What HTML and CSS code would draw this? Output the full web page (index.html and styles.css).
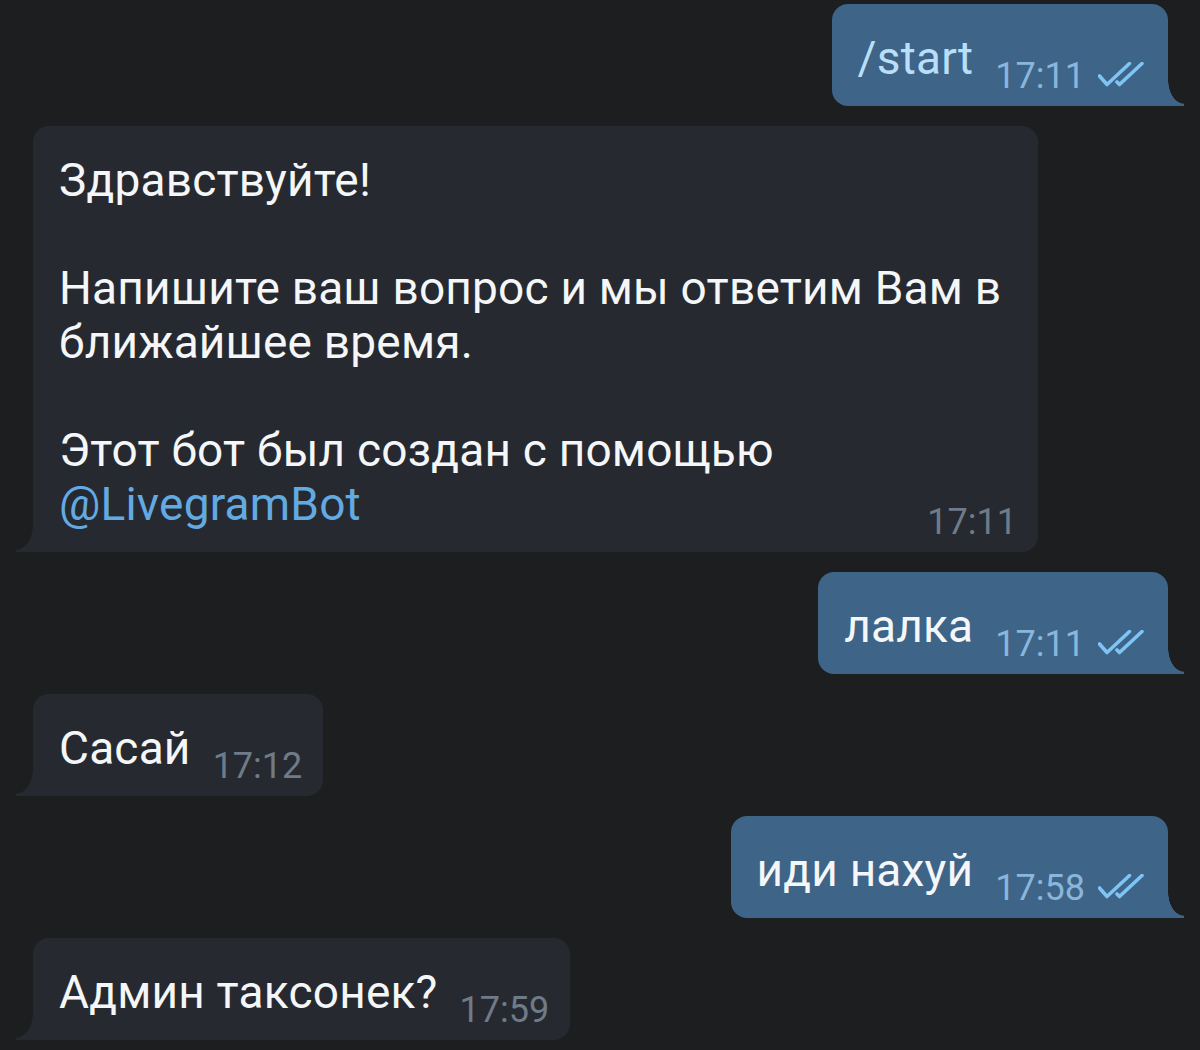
FILE: index.html
```html
<!DOCTYPE html>
<html lang="ru">
<head>
    <meta charset="UTF-8">
    <meta name="viewport" content="width=device-width, initial-scale=1.0">
    <title>Чат</title>
    <link rel="stylesheet" href="styles.css">
</head>
<body>
    <div class="chat">
        <div class="msg out">
            <p class="text"><a class="cmd" href="javascript:;">/start</a><span class="time">17:11<svg class="checks" width="46" height="26" viewBox="0 0 46 26"><path d="M1.5 14 L9 22.5 L31.5 1.5 M19 20 L21.5 22.5 L44 1.5"/></svg></span></p>
        </div>

        <div class="msg in">
            <p class="text">Здравствуйте!<br><br>Напишите ваш вопрос и мы ответим Вам в ближайшее время.<br><br>Этот бот был создан с помощью <a class="link" href="javascript:;">@LivegramBot</a><span class="time">17:11</span></p>
        </div>

        <div class="msg out">
            <p class="text">лалка<span class="time">17:11<svg class="checks" width="46" height="26" viewBox="0 0 46 26"><path d="M1.5 14 L9 22.5 L31.5 1.5 M19 20 L21.5 22.5 L44 1.5"/></svg></span></p>
        </div>

        <div class="msg in">
            <p class="text">Сасай<span class="time">17:12</span></p>
        </div>

        <div class="msg out">
            <p class="text">иди нахуй<span class="time">17:58<svg class="checks" width="46" height="26" viewBox="0 0 46 26"><path d="M1.5 14 L9 22.5 L31.5 1.5 M19 20 L21.5 22.5 L44 1.5"/></svg></span></p>
        </div>

        <div class="msg in">
            <p class="text">Админ таксонек?<span class="time">17:59</span></p>
        </div>
    </div>
</body>
</html>
```

FILE: styles.css
```css
*{
    margin: 0;
    padding: 0;
    box-sizing: border-box;
}
body{
    background-color: #1d1e20;
    font-family: Roboto, "Noto Sans", sans-serif;
    color: #f4f6f8;
}
a{
    text-decoration: none;
}
.chat{
    display: flex;
    flex-direction: column;
    gap: 20px;
    padding: 4px 32px 0 33px;
}
.msg{
    position: relative;
    border-radius: 16px;
    padding: 27px 21px 21px 26px;
}
.msg .text{
    font-size: 46px;
    line-height: 54px;
    letter-spacing: 0.2px;
}
.msg.in{
    align-self: flex-start;
    max-width: 1005px;
    background-color: #262a30;
    border-bottom-left-radius: 0;
}
.msg.out{
    align-self: flex-end;
    background-color: #3e6488;
    border-bottom-right-radius: 0;
    padding-right: 24px;
}
/* хвостики пузырей */
.msg.in::before,
.msg.out::after{
    content: "";
    position: absolute;
    bottom: 0;
    width: 17px;
    height: 26px;
}
.msg.in::before{
    left: -17px;
    background: radial-gradient(ellipse 17px 24px at 0 0, transparent 97%, #262a30 100%);
}
.msg.out::after{
    right: -16px;
    width: 16px;
    background: radial-gradient(ellipse 16px 24px at 100% 0, transparent 97%, #3e6488 100%);
}
.time{
    float: right;
    font-size: 36px;
    line-height: 36px;
    letter-spacing: 0;
    margin: 27px 0 -10px 22px;
    color: #6f7b88;
}
.out .time{
    color: #8ab6db;
}
.checks{
    margin-left: 13px;
}
.checks path{
    fill: none;
    stroke: #7ec4f4;
    stroke-width: 3.6;
    stroke-linecap: round;
    stroke-linejoin: round;
}
.link{
    color: #63aae3;
}
.cmd{
    color: #b9def8;
}
```
